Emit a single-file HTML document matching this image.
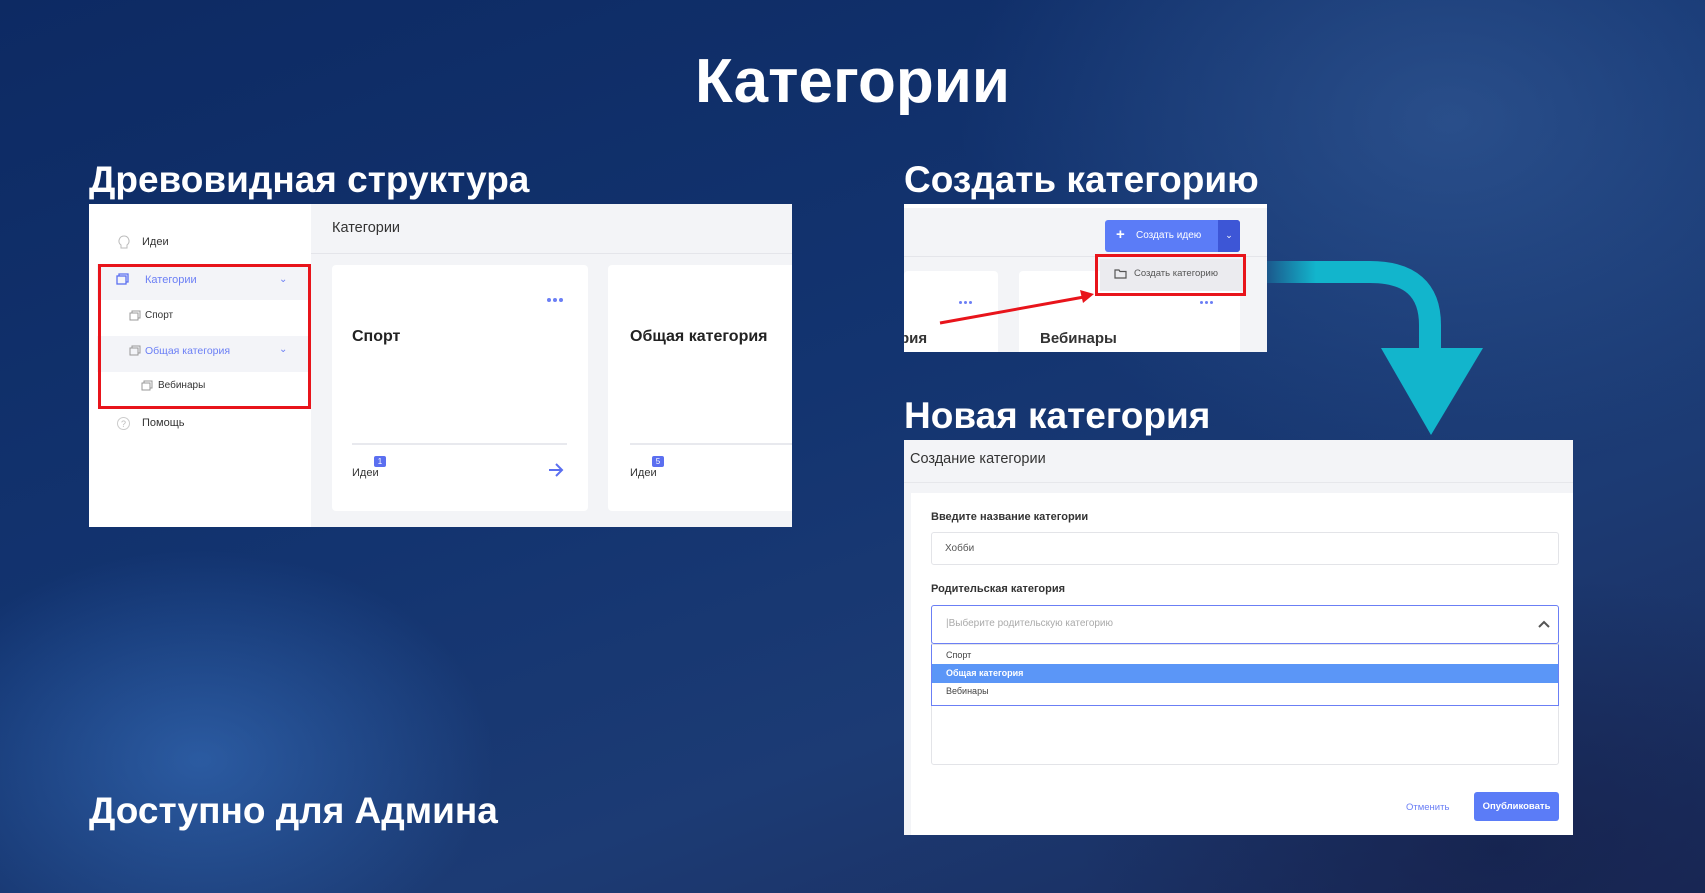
<!DOCTYPE html>
<html><head><meta charset="utf-8"><style>
*{margin:0;padding:0;box-sizing:border-box}
body{width:1705px;height:893px;overflow:hidden;position:relative;font-family:"Liberation Sans",sans-serif;
background:
radial-gradient(ellipse 420px 300px at 200px 760px,rgba(60,120,200,.55),transparent 70%),
radial-gradient(ellipse 700px 500px at 1450px 120px,rgba(60,100,160,.55),transparent 70%),
radial-gradient(ellipse 600px 400px at 1500px 850px,rgba(20,30,70,.6),transparent 70%),
linear-gradient(160deg,#0d2a63 0%,#133470 45%,#1c3b74 70%,#1a2a5a 100%);}
.abs{position:absolute}
.h{color:#fff;font-size:37px;font-weight:bold;white-space:nowrap}
.shot{position:absolute;background:#f3f4f7;overflow:hidden}
.t{position:absolute;white-space:nowrap}
.dots{position:absolute;display:flex;gap:2px}
.dots i{width:4px;height:4px;border-radius:2px;background:#6b7ff5;display:block}
</style></head><body>
<div class="abs h" style="left:0;width:1705px;text-align:center;top:46px;font-size:62px;font-weight:bold">Категории</div>
<div class="abs h" style="left:89px;top:159px">Древовидная структура</div>
<div class="abs h" style="left:904px;top:159px">Создать категорию</div>
<div class="abs h" style="left:904px;top:395px">Новая категория</div>
<div class="abs h" style="left:89px;top:790px">Доступно для Админа</div>

<!-- left screenshot -->
<div class="shot" style="left:89px;top:204px;width:703px;height:323px">
 <div class="abs" style="left:0;top:0;width:222px;height:323px;background:#fff"></div>
 <div class="abs" style="left:8px;top:60px;width:213px;height:36px;background:#f3f4f8"></div>
 <div class="abs" style="left:8px;top:132px;width:213px;height:36px;background:#f3f4f8"></div>
 <svg class="abs" style="left:28px;top:31px" width="14" height="16" viewBox="0 0 14 16"><path d="M7 1a5 5 0 0 0-3 9v3h6v-3a5 5 0 0 0-3-9z" fill="none" stroke="#bbb"/></svg>
 <div class="t" style="left:53px;top:32px;font-size:11px;color:#333">Идеи</div>
 <svg class="abs" style="left:27px;top:68px" width="14" height="13"><rect x="1" y="4" width="9" height="8" fill="none" stroke="#5b6ff0" stroke-width="1.3"/><path d="M3 4V2h9v8h-2" fill="none" stroke="#5b6ff0" stroke-width="1.3"/></svg>
 <div class="t" style="left:56px;top:70px;font-size:11px;color:#6b7ff5">Категории</div>
 <div class="t" style="left:190px;top:70px;font-size:10px;color:#6b7ff5">⌄</div>
 <svg class="abs" style="left:40px;top:105px" width="13" height="12"><rect x="1" y="4" width="8" height="7" fill="none" stroke="#999"/><path d="M3 4V2h8v7h-2" fill="none" stroke="#999"/></svg>
 <div class="t" style="left:56px;top:106px;font-size:10px;color:#333">Спорт</div>
 <svg class="abs" style="left:40px;top:140px" width="13" height="12"><rect x="1" y="4" width="8" height="7" fill="none" stroke="#999"/><path d="M3 4V2h8v7h-2" fill="none" stroke="#999"/></svg>
 <div class="t" style="left:56px;top:141px;font-size:10.5px;color:#6b7ff5">Общая категория</div>
 <div class="t" style="left:190px;top:140px;font-size:10px;color:#6b7ff5">⌄</div>
 <svg class="abs" style="left:52px;top:175px" width="13" height="12"><rect x="1" y="4" width="8" height="7" fill="none" stroke="#999"/><path d="M3 4V2h8v7h-2" fill="none" stroke="#999"/></svg>
 <div class="t" style="left:69px;top:176px;font-size:10px;color:#333">Вебинары</div>
 <div class="abs" style="left:9px;top:60px;width:213px;height:145px;border:3px solid #e8141b"></div>
 <svg class="abs" style="left:27px;top:212px" width="15" height="15"><circle cx="7.5" cy="7.5" r="6" fill="none" stroke="#ccc"/><text x="5" y="11" font-size="9" fill="#bbb" font-family="Liberation Sans">?</text></svg>
 <div class="t" style="left:53px;top:213px;font-size:11px;color:#333">Помощь</div>
 <div class="t" style="left:243px;top:16px;font-size:14.5px;color:#333">Категории</div>
 <div class="abs" style="left:222px;top:49px;width:481px;height:1px;background:#e4e5ea"></div>
 <div class="abs" style="left:243px;top:61px;width:256px;height:246px;background:#fff;border-radius:4px"></div>
 <div class="abs" style="left:519px;top:61px;width:200px;height:246px;background:#fff;border-radius:4px"></div>
 <div class="dots" style="left:458px;top:94px"><i></i><i></i><i></i></div>
 <div class="t" style="left:263px;top:124px;font-size:16px;font-weight:bold;color:#222">Спорт</div>
 <div class="t" style="left:541px;top:124px;font-size:16px;font-weight:bold;color:#222">Общая категория</div>
 <div class="abs" style="left:263px;top:239px;width:215px;height:2px;background:#e8e9ee"></div>
 <div class="abs" style="left:541px;top:239px;width:170px;height:2px;background:#e8e9ee"></div>
 <div class="abs" style="left:285px;top:252px;width:12px;height:11px;background:#5b6ff0;border-radius:2px;color:#fff;font-size:8px;text-align:center;line-height:11px">1</div>
 <div class="abs" style="left:563px;top:252px;width:12px;height:11px;background:#5b6ff0;border-radius:2px;color:#fff;font-size:8px;text-align:center;line-height:11px">5</div>
 <div class="t" style="left:263px;top:263px;font-size:11px;color:#333">Идеи</div>
 <div class="t" style="left:541px;top:263px;font-size:11px;color:#333">Идеи</div>
 <svg class="abs" style="left:459px;top:259px" width="16" height="14"><path d="M1 7h13M8 1l6 6-6 6" fill="none" stroke="#5b6ff0" stroke-width="2"/></svg>
</div>

<!-- right top screenshot -->
<div class="shot" style="left:904px;top:204px;width:363px;height:148px">
 <div class="abs" style="left:0;top:0;width:363px;height:4px;background:#fff"></div>
 <div class="abs" style="left:0;top:52px;width:363px;height:1px;background:#e4e5ea"></div>
 <div class="abs" style="left:0;top:67px;width:94px;height:90px;background:#fff;border-radius:4px"></div>
 <div class="abs" style="left:115px;top:67px;width:221px;height:90px;background:#fff;border-radius:4px"></div>
 <div class="dots" style="left:55px;top:97px"><i style="width:3px;height:3px"></i><i style="width:3px;height:3px"></i><i style="width:3px;height:3px"></i></div>
 <div class="dots" style="left:296px;top:97px"><i style="width:3px;height:3px"></i><i style="width:3px;height:3px"></i><i style="width:3px;height:3px"></i></div>
 <div class="t" style="left:-4px;top:126px;font-size:15px;font-weight:bold;color:#333">рия</div>
 <div class="t" style="left:136px;top:126px;font-size:15px;font-weight:bold;color:#333">Вебинары</div>
 <div class="abs" style="left:201px;top:16px;width:135px;height:32px;background:#5b7cf7;border-radius:3px"></div>
 <div class="abs" style="left:314px;top:16px;width:22px;height:32px;background:#3d56d6;border-radius:0 3px 3px 0;color:#fff;font-size:9px;text-align:center;line-height:30px">⌄</div>
 <div class="t" style="left:212px;top:22px;font-size:15px;color:#fff;font-weight:bold">+</div>
 <div class="t" style="left:232px;top:26px;font-size:10px;color:#fff">Создать идею</div>
 <div class="abs" style="left:196px;top:55px;width:143px;height:32px;background:#ebebef"></div>
 <svg class="abs" style="left:210px;top:64px" width="13" height="11"><path d="M1 2h4l1 1.5h6V10H1z" fill="none" stroke="#555" stroke-width="1.2"/></svg>
 <div class="t" style="left:230px;top:64px;font-size:9.5px;color:#555">Создать категорию</div>
 <div class="abs" style="left:191px;top:50px;width:151px;height:42px;border:3px solid #e8141b"></div>
 <svg class="abs" style="left:0;top:0" width="363" height="148"><line x1="36" y1="119" x2="180" y2="93" stroke="#e8141b" stroke-width="3"/><polygon points="190,90 176,86 179,99" fill="#e8141b"/></svg>
</div>

<!-- teal arrow -->
<svg class="abs" style="left:1260px;top:255px" width="240" height="190">
 <defs><linearGradient id="g" x1="0" x2="1"><stop offset="0" stop-color="#12b5cc" stop-opacity=".2"/><stop offset=".3" stop-color="#12b5cc"/></linearGradient></defs>
 <path d="M7 17 H110 Q170 17 170 70 V100" fill="none" stroke="url(#g)" stroke-width="22"/>
 <polygon points="121,93 223,93 171,180" fill="#12b5cc"/>
</svg>

<!-- form -->
<div class="shot" style="left:904px;top:440px;width:669px;height:395px;background:#f3f4f7">
 <div class="t" style="left:6px;top:11px;font-size:14.5px;color:#333">Создание категории</div>
 <div class="abs" style="left:0;top:42px;width:669px;height:1px;background:#e6e7eb"></div>
 <div class="abs" style="left:7px;top:53px;width:662px;height:342px;background:#fff"></div>
 <div class="t" style="left:27px;top:71px;font-size:11px;font-weight:bold;color:#333">Введите название категории</div>
 <div class="abs" style="left:27px;top:92px;width:628px;height:33px;border:1px solid #e3e4e8;border-radius:3px"></div>
 <div class="t" style="left:41px;top:103px;font-size:10px;color:#555">Хобби</div>
 <div class="t" style="left:27px;top:143px;font-size:11px;font-weight:bold;color:#333">Родительская категория</div>
 <div class="abs" style="left:27px;top:165px;width:628px;height:160px;border:1px solid #e3e4e8;border-radius:3px"></div>
 <div class="abs" style="left:27px;top:165px;width:628px;height:39px;border:1px solid #6b7ff5;border-radius:3px;background:#fff"></div>
 <div class="t" style="left:42px;top:178px;font-size:10px;color:#aaa">|Выберите родительскую категорию</div>
 <svg class="abs" style="left:634px;top:180px" width="12" height="8"><path d="M1 7l5-5 5 5" fill="none" stroke="#555" stroke-width="2"/></svg>
 <div class="abs" style="left:27px;top:204px;width:628px;height:62px;border:1px solid #6b7ff5;background:#fff;border-top-color:#e3e4e8"></div>
 <div class="t" style="left:42px;top:210px;font-size:9px;color:#444">Спорт</div>
 <div class="abs" style="left:28px;top:224px;width:626px;height:19px;background:#5b96f7"></div>
 <div class="t" style="left:42px;top:228px;font-size:9px;color:#fff;font-weight:bold">Общая категория</div>
 <div class="t" style="left:42px;top:246px;font-size:9px;color:#444">Вебинары</div>
 <div class="t" style="left:502px;top:362px;font-size:9.5px;color:#6b7ff5">Отменить</div>
 <div class="abs" style="left:570px;top:352px;width:85px;height:29px;background:#5b7cf7;border-radius:3px;color:#fff;font-size:9.5px;font-weight:bold;text-align:center;line-height:29px">Опубликовать</div>
</div>
</body></html>
